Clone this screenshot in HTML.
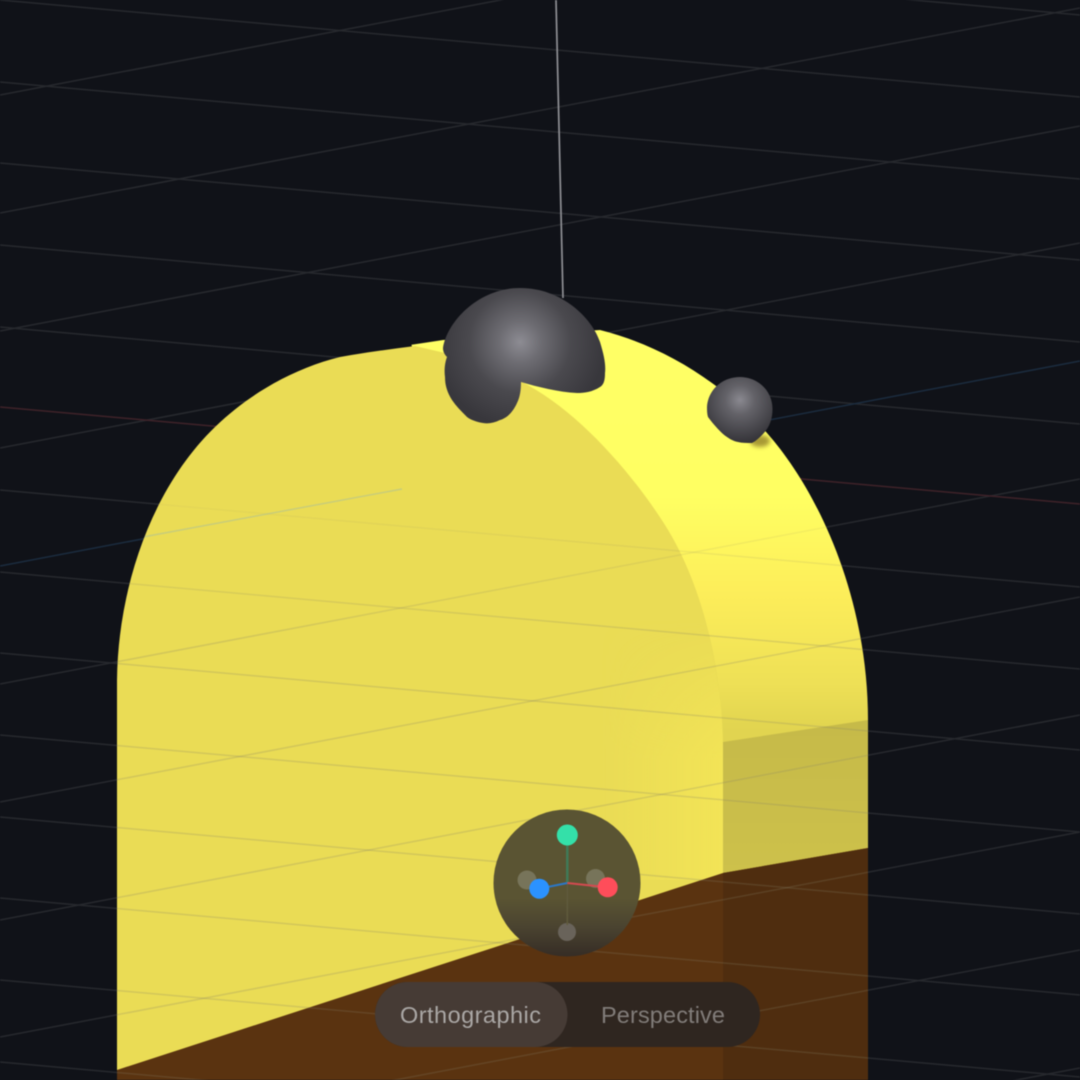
<!DOCTYPE html>
<html>
<head>
<meta charset="utf-8">
<style>
html,body{margin:0;padding:0;background:#101218;width:1080px;height:1080px;overflow:hidden}
svg{display:block;position:absolute;left:0;top:0;filter:blur(.4px)}
text{font-family:"Liberation Sans",sans-serif;font-size:23.5px}
</style>
</head>
<body>
<svg width="1080" height="1080" viewBox="0 0 1080 1080" xmlns="http://www.w3.org/2000/svg">
<defs>
  <linearGradient id="side" x1="0" y1="330" x2="0" y2="850" gradientUnits="userSpaceOnUse">
    <stop offset="0" stop-color="#ffff66"/>
    <stop offset=".32" stop-color="#ffff62"/>
    <stop offset=".5" stop-color="#fdee5a"/>
    <stop offset=".68" stop-color="#eee056"/>
    <stop offset=".76" stop-color="#e2d550"/>
    <stop offset="1" stop-color="#d8cc4e"/>
  </linearGradient>
  <linearGradient id="band" x1="0" y1="720" x2="0" y2="870" gradientUnits="userSpaceOnUse">
    <stop offset="0" stop-color="#c6ba49"/>
    <stop offset="1" stop-color="#cdc14b"/>
  </linearGradient>
  <linearGradient id="frontGlow" x1="600" y1="0" x2="723" y2="0" gradientUnits="userSpaceOnUse">
    <stop offset="0" stop-color="#fff05a" stop-opacity="0"/>
    <stop offset="1" stop-color="#fff05a" stop-opacity=".4"/>
  </linearGradient>
  <radialGradient id="big" cx="520" cy="342" r="85" gradientUnits="userSpaceOnUse">
    <stop offset="0" stop-color="#8d8c93"/>
    <stop offset=".25" stop-color="#6d6c72"/>
    <stop offset=".6" stop-color="#4a494e"/>
    <stop offset="1" stop-color="#38373c"/>
  </radialGradient>
  <radialGradient id="small" cx="740" cy="400" r="42" gradientUnits="userSpaceOnUse">
    <stop offset="0" stop-color="#8a8990"/>
    <stop offset=".35" stop-color="#636268"/>
    <stop offset="1" stop-color="#36353a"/>
  </radialGradient>
  <linearGradient id="giz" x1="0" y1="810" x2="0" y2="957" gradientUnits="userSpaceOnUse">
    <stop offset="0" stop-color="#5a5433"/>
    <stop offset=".6" stop-color="#5a5433"/>
    <stop offset=".8" stop-color="#4a4330"/>
    <stop offset="1" stop-color="#352c25"/>
  </linearGradient>
  <linearGradient id="fade" x1="0" y1="465" x2="0" y2="640" gradientUnits="userSpaceOnUse">
    <stop offset="0" stop-color="#000"/>
    <stop offset="1" stop-color="#fff"/>
  </linearGradient>
  <linearGradient id="fade2" x1="0" y1="620" x2="0" y2="760" gradientUnits="userSpaceOnUse">
    <stop offset="0" stop-color="#000"/>
    <stop offset="1" stop-color="#fff"/>
  </linearGradient>
  <mask id="fadeMask" maskUnits="userSpaceOnUse" x="0" y="0" width="1080" height="1080">
    <rect width="1080" height="1080" fill="url(#fade)"/>
  </mask>
  <mask id="fadeMask2" maskUnits="userSpaceOnUse" x="0" y="0" width="1080" height="1080">
    <rect width="1080" height="1080" fill="url(#fade2)"/>
  </mask>
  <clipPath id="solid">
    <path d="M117 1080V680C118 590 150 490 215 427C250 393 295 368 340 357C375 350 410 345 443 340L600 330C660 345 720 380 767 433C820 493 868 600 868 720V1080Z"/>
  </clipPath>
  <g id="grid" fill="none">
    <path d="M0 -82L1080 15M0 0L1080 97M0 82L1080 179M0 163L1080 260M0 245L1080 342M0 327L1080 424M0 490L1080 587M0 572L1080 669M0 653L1080 750M0 735L1080 832M0 817L1080 914M0 898L1080 995M0 980L1080 1077M0 1062L1080 1159"/>
    <path d="M0 95L1080 -110M0 213L1080 8M0 331L1080 126M0 448L1080 243M0 684L1080 479M0 802L1080 597M0 920L1080 715M0 1037L1080 832M0 1155L1080 950M0 1273L1080 1068M0 1391L1080 1186"/>
  </g>
</defs>

<rect width="1080" height="1080" fill="#101218"/>

<!-- background grid -->
<use href="#grid" stroke="#27292e" stroke-width="1.5"/>
<path d="M0 407L1080 504" stroke="#3f2229" stroke-width="1.5" fill="none"/>
<path d="M0 566L1080 361" stroke="#1b2c3f" stroke-width="1.5" fill="none"/>

<!-- vertical line -->
<path d="M556 0L563 298" stroke="#8f9095" stroke-width="1.7" fill="none"/>

<!-- side face -->
<path clip-path="url(#solid)" d="M400 300H900V1080H600Z" fill="url(#side)"/>
<path d="M723 742L868 720V848L723 873Z" fill="url(#band)"/>

<!-- front face -->
<path d="M117 1080V680C118 590 150 490 215 427C250 393 295 368 340 357C368 352 392 349 415 346L445 353L520 381C575 408 630 470 665 525C700 580 723 665 723 750V1080Z" fill="#eadc55"/>
<!-- brighter strip near right of front face -->
<g mask="url(#fadeMask2)">
  <path d="M600 620H704C714 655 723 700 723 750V880H600Z" fill="url(#frontGlow)"/>
</g>

<!-- brown base -->
<path d="M117 1070L723 873L868 848V1080H117Z" fill="#5a3310"/>
<path d="M723 873L868 848V1080H723Z" fill="#4f2d0f"/>

<!-- grid over solid -->
<g clip-path="url(#solid)">
  <g mask="url(#fadeMask)">
    <use href="#grid" stroke="#85836a" stroke-opacity=".24" stroke-width="1.5"/>
  </g>
  <path d="M143 537L402 489" stroke="#a9c09a" stroke-width="1.4" fill="none" opacity=".55"/>
</g>

<!-- contact shadow -->
<g clip-path="url(#solid)">
  <ellipse cx="760" cy="441" rx="10" ry="6" fill="#a89a35" style="filter:blur(2px)"/>
</g>

<!-- spheres -->
<path d="M443 348C447 322 478 288 520 288C562 288 592 318 600 342C604 355 606 365 605 373C605 382 603 385 600 387C592 392 585 393 577 393C558 392 538 387 521 382C521 390 520 397 517 403C513 412 507 418 500 420C494 423 488 424 483 423C477 422 471 420 467 417C461 411 456 406 452 400C447 392 445 385 445 377C444 370 445 362 447 357C444 354 443 351 443 348Z" fill="url(#big)"/>
<path d="M707 407C708 390 722 377 740 377C758 377 772.5 391 772.5 409C772.5 418 770 427 763 434C759 438 756 441 752 443C747 443 742 443 738 442C733 441 730 439 727 437C721 433 714 425 708 417C707 414 707 410 707 407Z" fill="url(#small)"/>

<!-- gizmo -->
<circle cx="567" cy="883" r="73.5" fill="url(#giz)"/>
<circle cx="527" cy="880" r="9.5" fill="#77745a"/>
<circle cx="595.5" cy="878.5" r="9.5" fill="#77745a"/>
<circle cx="567" cy="932" r="9" fill="#69635a"/>
<path d="M567.3 883V925" stroke="#5f5a3c" stroke-width="1.5"/>
<path d="M567.3 883V840" stroke="#3f7a58" stroke-width="2.5"/>
<path d="M567.3 883L545 887.5" stroke="#2b78c8" stroke-width="2"/>
<path d="M567.3 883L600 886.5" stroke="#d34a50" stroke-width="2"/>
<circle cx="567.3" cy="835" r="10.5" fill="#34e0a9"/>
<circle cx="539.3" cy="888.7" r="10" fill="#2b92ff"/>
<circle cx="607.7" cy="887.3" r="10" fill="#ff4d5a"/>

<!-- toggle -->
<rect x="375" y="982" width="385" height="65" rx="32.5" fill="#2f2620"/>
<rect x="375" y="982" width="192.5" height="65" rx="32.5" fill="#463b35"/>
<text x="400" y="1023" textLength="141" lengthAdjust="spacing" fill="#aaa7a5">Orthographic</text>
<text x="601" y="1023" textLength="124" lengthAdjust="spacing" fill="#817c79">Perspective</text>
</svg>
</body>
</html>
